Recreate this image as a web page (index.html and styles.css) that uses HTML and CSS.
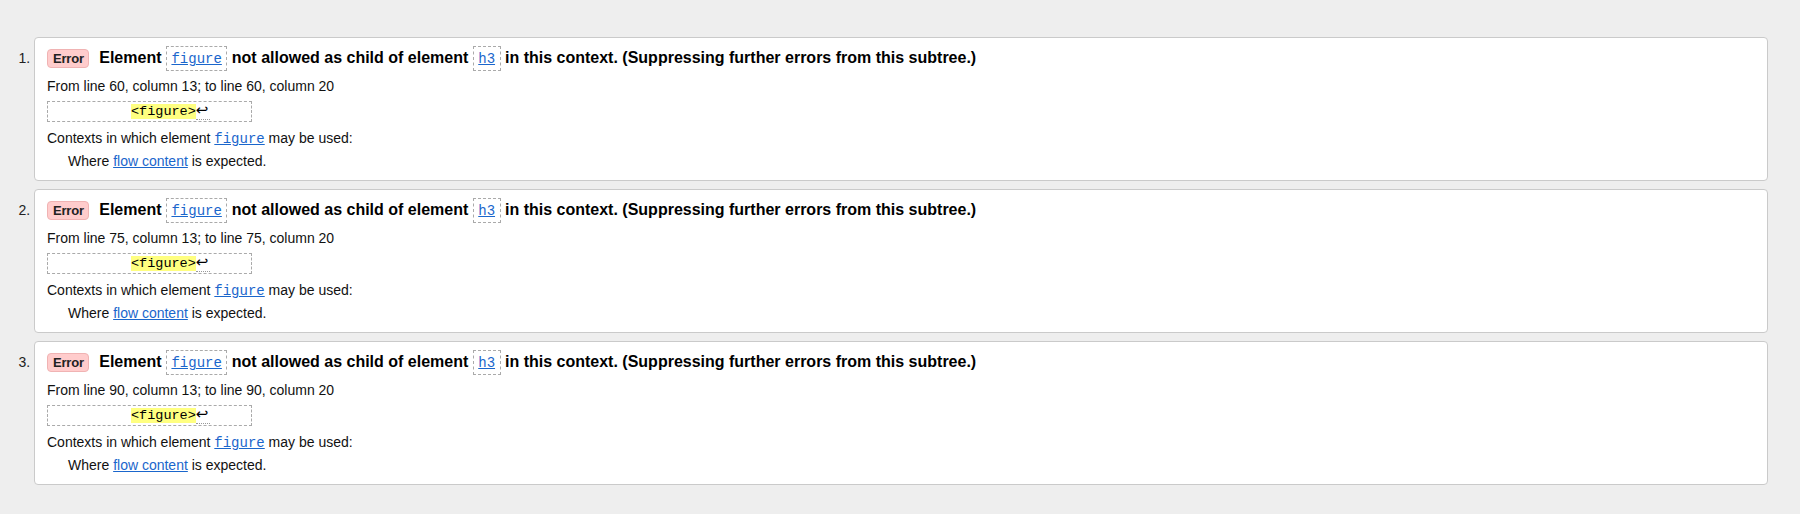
FILE: index.html
```html
<!DOCTYPE html>
<html lang="en">
<head>
<meta charset="utf-8">
<title>Validation results</title>
<link rel="stylesheet" href="styles.css">
</head>
<body>
<ol class="messages">
  <li class="msg">
    <p class="msg-head"><span class="badge">Error</span> Element <span class="cbox"><a class="code-link" href="#">figure</a></span> not allowed as child of element <span class="cbox"><a class="code-link" href="#">h3</a></span> in this context. (Suppressing further errors from this subtree.)</p>
    <p class="loc">From line 60, column 13; to line 60, column 20</p>
    <div class="extract"><code class="src">          <mark class="hl">&lt;figure&gt;</mark><span class="lf">↩</span>     </code></div>
    <dl class="ctx">
      <dt>Contexts in which element <a class="code-link" href="#">figure</a> may be used:</dt>
      <dd>Where <a class="link" href="#">flow content</a> is expected.</dd>
    </dl>
  </li>
  <li class="msg">
    <p class="msg-head"><span class="badge">Error</span> Element <span class="cbox"><a class="code-link" href="#">figure</a></span> not allowed as child of element <span class="cbox"><a class="code-link" href="#">h3</a></span> in this context. (Suppressing further errors from this subtree.)</p>
    <p class="loc">From line 75, column 13; to line 75, column 20</p>
    <div class="extract"><code class="src">          <mark class="hl">&lt;figure&gt;</mark><span class="lf">↩</span>     </code></div>
    <dl class="ctx">
      <dt>Contexts in which element <a class="code-link" href="#">figure</a> may be used:</dt>
      <dd>Where <a class="link" href="#">flow content</a> is expected.</dd>
    </dl>
  </li>
  <li class="msg">
    <p class="msg-head"><span class="badge">Error</span> Element <span class="cbox"><a class="code-link" href="#">figure</a></span> not allowed as child of element <span class="cbox"><a class="code-link" href="#">h3</a></span> in this context. (Suppressing further errors from this subtree.)</p>
    <p class="loc">From line 90, column 13; to line 90, column 20</p>
    <div class="extract"><code class="src">          <mark class="hl">&lt;figure&gt;</mark><span class="lf">↩</span>     </code></div>
    <dl class="ctx">
      <dt>Contexts in which element <a class="code-link" href="#">figure</a> may be used:</dt>
      <dd>Where <a class="link" href="#">flow content</a> is expected.</dd>
    </dl>
  </li>
</ol>
</body>
</html>
```
FILE: styles.css
```css
html, body {
  margin: 0;
  padding: 0;
}
body {
  background: #eeeeee;
  font-family: "Liberation Sans", Arial, sans-serif;
  font-size: 14px;
  color: #111;
}
.messages {
  margin: 0;
  padding: 37px 32px 0 34px;
  list-style: decimal outside;
}
.msg {
  background: #fff;
  border: 1px solid #cacaca;
  border-radius: 4px;
  padding: 8px 12px 10px 12px;
  margin-bottom: 8px;
  color: #111;
}
.msg::marker {
  color: #222;
  font-size: 14px;
}
.msg-head {
  margin: 0;
  font-size: 16px;
  font-weight: bold;
  line-height: 24px;
  color: #000;
}
.badge {
  display: inline-block;
  vertical-align: middle;
  background: #ffcccc;
  border: 1px solid #f0b3b3;
  border-radius: 4px;
  padding: 0 4px 0 5px;
  font-size: 13px;
  line-height: 17px;
  font-weight: bold;
  color: #222;
  margin-right: 6px;
  letter-spacing: -0.2px;
}
.cbox {
  display: inline-block;
  border: 1px dashed #aaa;
  padding: 2px 4.5px;
  line-height: 17px;
  font-weight: normal;
}
.code-link {
  font-family: "Liberation Mono", "DejaVu Sans Mono", monospace;
  font-size: 14px;
  font-weight: normal;
  color: #1a66cc;
  text-decoration: underline;
}
.loc {
  margin: 6px 0 0 0;
  line-height: 18px;
}
.extract {
  margin-top: 6px;
}
.src {
  display: inline-block;
  white-space: pre;
  border: 1px dashed #aaa;
  padding: 0 1px 0 2px;
  font-family: "Liberation Mono", "DejaVu Sans Mono", monospace;
  font-size: 13.5px;
  line-height: 19px;
  color: #000;
}
.hl {
  background: #ffff80;
  color: #000;
}
.lf {
  display: inline-block;
  font-family: "DejaVu Sans", sans-serif;
  font-size: 15px;
  line-height: 17px;
  width: 14px;
  border-bottom: 1px dotted #999;
}
.ctx {
  margin: 7px 0 0 0;
  line-height: 18px;
}
.ctx dt {
  margin: 0;
}
.ctx dd {
  margin: 4px 0 0 21px;
}
.link {
  color: #1a66cc;
  text-decoration: underline;
}
```
